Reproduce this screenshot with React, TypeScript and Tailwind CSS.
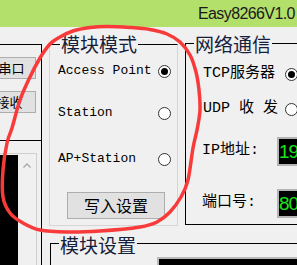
import { useMemo } from "react"

// hand-drawn red loop around the "模块模式" group
const loop: [number, number][] = [
  [50, 44], [60, 37], [73, 31], [90, 27.5], [107, 26.5], [130, 27.5], [150, 29.5], [167, 34],
  [180, 42], [190, 55], [196, 72], [199, 90], [200, 110], [197, 130], [193, 148], [188, 180],
  [181, 197], [170, 212], [157, 222], [140, 227], [100, 231], [67, 232], [40, 230], [23, 223],
  [10, 213], [3, 197], [3, 170], [7, 143], [12, 128], [20, 100], [30, 77], [40, 58],
]

function smoothPath(p: [number, number][]) {
  const n = p.length
  let d = `M${p[0][0]},${p[0][1]}`
  for (let i = 0; i < n; i++) {
    const p0 = p[(i - 1 + n) % n]
    const p1 = p[i]
    const p2 = p[(i + 1) % n]
    const p3 = p[(i + 2) % n]
    const c1x = p1[0] + (p2[0] - p0[0]) / 6
    const c1y = p1[1] + (p2[1] - p0[1]) / 6
    const c2x = p2[0] - (p3[0] - p1[0]) / 6
    const c2y = p2[1] - (p3[1] - p1[1]) / 6
    d += ` C${c1x.toFixed(1)},${c1y.toFixed(1)} ${c2x.toFixed(1)},${c2y.toFixed(1)} ${p2[0]},${p2[1]}`
  }
  return d + " Z"
}

const mono = "font-['Liberation_Mono','Noto_Sans_CJK_SC',monospace]"
const cjk = "font-['Noto_Sans_CJK_SC',sans-serif]"

function Radio({ on }: { on?: boolean }) {
  return (
    <span className="flex h-[13px] w-[13px] shrink-0 items-center justify-center rounded-full border border-[#333] bg-white">
      {on && <span className="h-[7px] w-[7px] rounded-full bg-black" />}
    </span>
  )
}

function GroupTitle({ text, left, top }: { text: string; left: string; top: string }) {
  return (
    <span className={`absolute ${left} ${top} bg-[#f0f0f0] px-[1px] text-[19px] leading-[19px] text-[#16203a] ${cjk}`}>
      {text}
    </span>
  )
}

export default function App() {
  const d = useMemo(() => smoothPath(loop), [])

  return (
    <div className="relative h-[265px] w-[297px] overflow-hidden bg-[#f0f0f0] text-black">
      {/* title bar */}
      <div className="flex h-[27px] items-center bg-[#b3df6b] pl-[198px] pt-[1px] font-['Liberation_Sans',sans-serif] text-[16px] tracking-[-0.6px] text-[#1a1a1a] whitespace-nowrap">
        Easy8266V1.0
      </div>

      <div className="flex h-[238px]">
        {/* serial panel, mostly off-screen */}
        <div className="mt-[17px] flex w-[42px] shrink-0 flex-col overflow-hidden border-r border-black">
          <div className="flex h-[97px] shrink-0 flex-col items-end gap-[12px] border-y border-black pr-[5px] pt-[12px]">
            <button className={`h-[22px] w-[75px] shrink-0 border border-[#adadad] bg-[#e1e1e1] text-[13px] leading-[20px] whitespace-nowrap ${cjk}`}>
              打开串口
            </button>
            <button className={`h-[22px] w-[79px] shrink-0 border border-[#adadad] bg-[#e1e1e1] text-[13px] leading-[20px] whitespace-nowrap ${cjk}`}>
              开始接收
            </button>
          </div>
          <div className="mt-[12px] flex w-[37px] flex-1 border-r border-t border-[#cfcfcf] pt-[1px]">
            <div className="w-[18px] bg-black" />
            <div className="flex w-[18px] justify-center pt-[8px]">
              <svg width="8" height="5" viewBox="0 0 8 5">
                <path d="M0.5 4.5 L4 1 L7.5 4.5" fill="none" stroke="#a8a8a8" strokeWidth="1.4" />
              </svg>
            </div>
          </div>
        </div>

        <div className="flex flex-1 flex-col">
          <div className="mt-[17px] flex">
            {/* 模块模式 */}
            <div className="relative ml-[7px] flex h-[182px] w-[129px] shrink-0 flex-col border border-[#d5d5d5] border-t-black pl-[8px] pr-[6px] pt-[16px]">
              <GroupTitle text="模块模式" left="left-[10px]" top="-top-[11px]" />
              <div className={`flex h-[20px] items-center justify-between text-[13px] ${mono}`}>
                <span>Access Point</span>
                <Radio on />
              </div>
              <div className={`mt-[22px] flex h-[20px] items-center justify-between text-[13px] ${mono}`}>
                <span>Station</span>
                <Radio />
              </div>
              <div className={`mt-[26px] flex h-[20px] items-center justify-between text-[13px] ${mono}`}>
                <span>AP+Station</span>
                <Radio />
              </div>
              <button className={`ml-[9px] mt-[23px] h-[27px] w-[98px] border border-[#adadad] bg-[#e1e1e1] text-[16px] leading-[25px] ${cjk}`}>
                写入设置
              </button>
            </div>

            {/* 网络通信 */}
            <div className="relative -mt-[1px] ml-[7px] flex h-[182px] w-[180px] shrink-0 flex-col border border-black pt-[20px]">
              <GroupTitle text="网络通信" left="left-[8px]" top="-top-[10px]" />
              <div className={`flex h-[20px] items-center pl-[17px] text-[15px] ${mono}`}>
                <span className="w-[82px] shrink-0 whitespace-nowrap">TCP服务器</span>
                <Radio on />
              </div>
              <div className={`mt-[15px] flex h-[20px] items-center pl-[17px] text-[15px] ${mono}`}>
                <span className="w-[82px] shrink-0 whitespace-nowrap">UDP 收 发</span>
                <Radio />
              </div>
              <div className={`mt-[18px] flex items-center pl-[16px] text-[15px] ${mono}`}>
                <span className="w-[75px] shrink-0 whitespace-nowrap">IP地址:</span>
                <div className="h-[29px] w-[80px] shrink-0 overflow-hidden border-2 border-[#b4b4b4] bg-black font-['Liberation_Sans',sans-serif] text-[19px] leading-[25px] tracking-[-1px] whitespace-nowrap text-[#19e619]">
                  192.168.4.1
                </div>
              </div>
              <div className={`mt-[23px] flex items-center pl-[16px] text-[15px] ${mono}`}>
                <span className="w-[75px] shrink-0 whitespace-nowrap">端口号:</span>
                <div className="h-[29px] w-[80px] shrink-0 overflow-hidden border-2 border-[#b4b4b4] bg-black font-['Liberation_Sans',sans-serif] text-[19px] leading-[25px] tracking-[-1px] whitespace-nowrap text-[#19e619]">
                  8080
                </div>
              </div>
            </div>
          </div>

          {/* 模块设置 */}
          <div className="relative ml-[8px] mt-[17px] flex-1 border-l border-t border-black">
            <GroupTitle text="模块设置" left="left-[8px]" top="-top-[9px]" />
            <div className="ml-[106px] mt-[13px] h-[30px] border-2 border-[#b9b9b9] bg-black" />
          </div>
        </div>
      </div>

      {/* annotation */}
      <svg className="pointer-events-none absolute inset-0" width="297" height="265" viewBox="0 0 297 265">
        <path d={d} fill="none" stroke="#f83a3a" strokeWidth="3.5" strokeLinejoin="round" />
      </svg>
    </div>
  )
}
